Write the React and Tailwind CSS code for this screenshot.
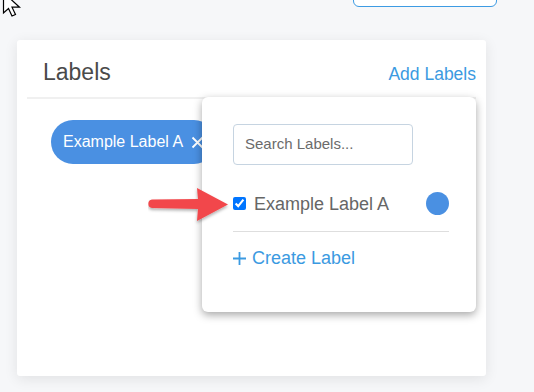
import React from "react";

const Cursor = () => (
  <svg
    className="absolute left-[2px] top-[-9px]"
    width="22"
    height="27"
    viewBox="0 0 22 27"
  >
    <path
      d="M1.5 1.5 L1.5 22 L6.5 17.5 L10 25 L13.5 23.5 L10 16.2 L17.5 16.2 Z"
      fill="#fff"
      stroke="#000"
      strokeWidth="1.2"
      strokeLinejoin="miter"
    />
  </svg>
);

const RedArrow = () => (
  <svg
    className="absolute left-[131px] top-[86px]"
    width="84"
    height="40"
    viewBox="0 0 84 40"
  >
    <defs>
      <filter id="sh" x="-20%" y="-30%" width="140%" height="170%">
        <feDropShadow dx="0" dy="2" stdDeviation="1.5" floodColor="#000" floodOpacity="0.3" />
      </filter>
    </defs>
    <g filter="url(#sh)">
      <path
        d="M4 14.5 L50 14 L49 3 L80 19.5 L49 36 L50 24 L4 23 A4.3 4.3 0 0 1 4 14.5 Z"
        fill="#f2474b"
      />
    </g>
  </svg>
);

const App = () => {
  return (
    <div
      className="relative w-[534px] h-[392px] overflow-hidden bg-[#f6f7f9]"
      style={{ fontFamily: "Arial, 'Liberation Sans', sans-serif" }}
    >
      <Cursor />

      <div className="flex justify-end pr-[37px]">
        <div className="w-[144px] h-[20px] -mt-[13px] bg-white border-[1.5px] border-[#3d9be3] rounded-[6px]"></div>
      </div>

      <div className="ml-[17px] mt-[33px] w-[469px] h-[336px] bg-white rounded-[3px] shadow-[0_3px_14px_rgba(0,0,0,0.09)]">
        <div className="flex items-end justify-between h-[57px] pl-[26px] pr-[10px] pb-[13px]">
          <div className="text-[23px] leading-none text-[#4a4a4a]">Labels</div>
          <div className="text-[17.5px] leading-none text-[#3b9ae1] mb-[1px]">Add Labels</div>
        </div>
        <div className="mx-[10px] h-[2px] bg-[#f0f0f0]"></div>

        <div className="relative">
          <div className="pl-[34px] pt-[21px]">
            <div className="inline-flex items-center h-[44px] pl-[12px] pr-[12px] gap-[8px] rounded-full bg-[#4a90e2] text-white text-[16px]">
              <span>Example Label A</span>
              <svg width="13" height="13" viewBox="0 0 13 13">
                <path d="M1.5 1.5 L11.5 11.5 M11.5 1.5 L1.5 11.5" stroke="#fff" strokeWidth="1.8" />
              </svg>
            </div>
          </div>

          <div className="absolute left-[185px] top-[-2px] w-[274px] h-[215px] bg-white rounded-[6px] shadow-[0_3px_8px_rgba(0,0,0,0.35)] pl-[31px] pr-[27px] pt-[27px]">
            <div className="w-[180px] h-[41px] flex items-center border border-[#c6d4e1] rounded-[4px] px-[11px] text-[15px] text-[#6b6b6b]">
              Search Labels...
            </div>

            <div className="flex items-center justify-between h-[23px] mt-[27px]">
              <div className="flex items-center gap-[8px]">
                <input
                  type="checkbox"
                  checked
                  readOnly
                  className="m-0 w-[13px] h-[13px] accent-[#0075ff]"
                />
                <span className="text-[18px] text-[#666666] leading-none">Example Label A</span>
              </div>
              <div className="w-[23px] h-[23px] rounded-full bg-[#4a90e2]"></div>
            </div>

            <div className="h-px bg-[#dedede] mt-[16px]"></div>

            <div className="flex items-center gap-[6px] mt-[14px] h-[24px] text-[#3b9ae1]">
              <svg width="13" height="13" viewBox="0 0 13 13">
                <path d="M6.5 0 V13 M0 6.5 H13" stroke="#3b9ae1" strokeWidth="1.8" />
              </svg>
              <span className="text-[18px] leading-none">Create Label</span>
            </div>
          </div>

          <RedArrow />
        </div>
      </div>
    </div>
  );
};

export default App;
